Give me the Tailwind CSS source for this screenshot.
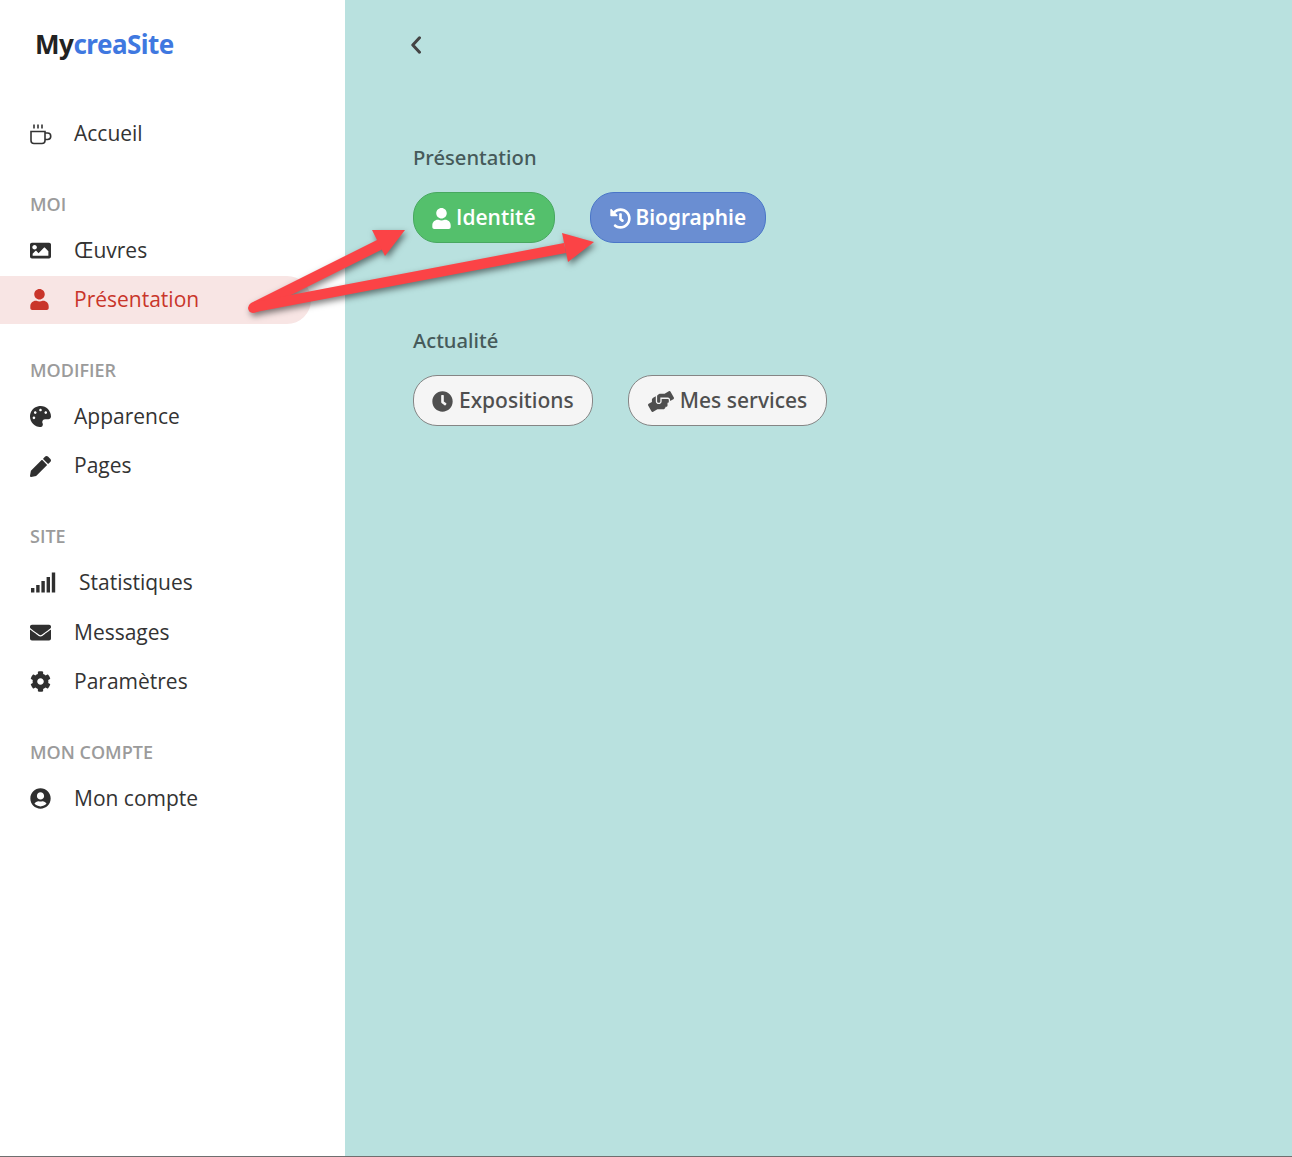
<!DOCTYPE html>
<html lang="fr">
<head>
  <meta charset="UTF-8">
  <title>MycreaSite</title>
  <script src="https://cdn.jsdelivr.net/npm/@tailwindcss/browser@4"></script>
</head>
<body class="bg-white">
<div class="relative flex h-[1157px] w-full overflow-hidden border-b border-[#6f6f6f] font-['Open_Sans',sans-serif]">

  <!-- Sidebar -->
  <aside class="w-[345px] shrink-0 bg-white">
    <div class="flex h-[109px] items-start pl-[35px] pt-[25px] font-['Noto_Sans',sans-serif] text-[26px] leading-[38px] font-bold tracking-[-0.5px]">
      <span class="text-[#222]">My</span><span class="text-[#3f78e0]">creaSite</span>
    </div>

    <nav class="flex flex-col gap-[25px] text-[21px] text-[#333]">
      <div>
        <a class="flex h-[49.6px] w-[311px] items-center pl-[30px]">
          <svg class="w-[22px] h-[22px] shrink-0" viewBox="0 0 22 22" fill="none" stroke="#333" stroke-width="1.6"><path d="M1 8.5h14v9a3 3 0 0 1-3 3H4a3 3 0 0 1-3-3z"/><path d="M15 10h2.5a3.2 3.2 0 0 1 0 6.5H15"/><path d="M4 1.5v4M8 1.5v4M12 1.5v4"/></svg>
          <span class="ml-[22px]">Accueil</span>
        </a>
      </div>

      <div>
        <div class="flex h-[42px] items-center pl-[30px] text-[18px] font-semibold text-[#9b9b9b]">MOI</div>
        <a class="flex h-[49.6px] w-[311px] items-center pl-[30px]">
          <svg class="w-[21px] h-[21px] shrink-0" viewBox="0 0 512 512" fill="#2f2f2f"><path d="M464 448H48c-26.51 0-48-21.49-48-48V112c0-26.51 21.49-48 48-48h416c26.51 0 48 21.49 48 48v288c0 26.51-21.49 48-48 48zM112 120c-30.928 0-56 25.072-56 56s25.072 56 56 56 56-25.072 56-56-25.072-56-56-56zM64 384h384V272l-87.515-87.515c-4.686-4.686-12.284-4.686-16.971 0L208 320l-55.515-55.515c-4.686-4.686-12.284-4.686-16.971 0L64 336v48z"/></svg>
          <span class="ml-[23px]">Œuvres</span>
        </a>
        <a class="my-[0.8px] flex h-[48px] w-[311px] items-center rounded-r-[24px] bg-[#f8e5e4] pl-[30px] text-[#c9352a]">
          <svg class="w-[19px] h-[21px] shrink-0" viewBox="0 0 448 512" fill="#c9352a"><path d="M224 256c70.7 0 128-57.3 128-128S294.7 0 224 0 96 57.3 96 128s57.3 128 128 128zm89.6 32h-16.7c-22.2 10.2-46.9 16-72.9 16s-50.6-5.8-72.9-16h-16.7C60.2 288 0 348.2 0 422.4V464c0 26.5 21.5 48 48 48h352c26.5 0 48-21.5 48-48v-41.6c0-74.2-60.2-134.4-134.4-134.4z"/></svg>
          <span class="ml-[25px]">Présentation</span>
        </a>
      </div>

      <div>
        <div class="flex h-[42px] items-center pl-[30px] text-[18px] font-semibold text-[#9b9b9b]">MODIFIER</div>
        <a class="flex h-[49.6px] w-[311px] items-center pl-[30px]">
          <svg class="w-[21px] h-[21px] shrink-0" viewBox="0 0 512 512" fill="#2f2f2f"><path d="M204.3 5C104.9 24.4 24.8 104.3 5.2 203.4c-37 187 131.7 326.4 258.8 306.7 41.2-6.4 61.4-54.6 42.5-91.7-23.1-45.4 9.9-98.4 60.9-98.4h79.7c35.8 0 64.8-29.6 64.9-65.3C511.5 97.1 368.1-26.9 204.3 5zM96 320c-17.7 0-32-14.3-32-32s14.3-32 32-32 32 14.3 32 32-14.3 32-32 32zm32-128c-17.7 0-32-14.3-32-32s14.3-32 32-32 32 14.3 32 32-14.3 32-32 32zm128-64c-17.7 0-32-14.3-32-32s14.3-32 32-32 32 14.3 32 32-14.3 32-32 32zm128 64c-17.7 0-32-14.3-32-32s14.3-32 32-32 32 14.3 32 32-14.3 32-32 32z"/></svg>
          <span class="ml-[23px]">Apparence</span>
        </a>
        <a class="flex h-[49.6px] w-[311px] items-center pl-[30px]">
          <svg class="w-[21px] h-[21px] shrink-0" viewBox="0 0 512 512" fill="#2f2f2f"><path d="M497.9 142.1l-46.1 46.1c-4.7 4.7-12.3 4.7-17 0l-111-111c-4.7-4.7-4.7-12.3 0-17l46.1-46.1c18.7-18.7 49.1-18.7 67.9 0l60.1 60.1c18.8 18.7 18.8 49.1 0 67.9zM284.2 99.8L21.6 362.4.4 483.9c-2.9 16.4 11.4 30.6 27.8 27.8l121.5-21.3 262.6-262.6c4.7-4.7 4.7-12.3 0-17l-111-111c-4.8-4.7-12.4-4.7-17.1 0z"/></svg>
          <span class="ml-[23px]">Pages</span>
        </a>
      </div>

      <div>
        <div class="flex h-[42px] items-center pl-[30px] text-[18px] font-semibold text-[#9b9b9b]">SITE</div>
        <a class="flex h-[49.6px] w-[311px] items-center pl-[30px]">
          <svg class="w-[26px] h-[21px] shrink-0" viewBox="0 0 26 21" fill="#2f2f2f"><rect x="1" y="16" width="3.4" height="4.5"/><rect x="6.2" y="13" width="3.4" height="7.5"/><rect x="11.4" y="9" width="3.4" height="11.5"/><rect x="16.6" y="5" width="3.4" height="15.5"/><rect x="21.8" y="0.5" width="3.4" height="20"/></svg>
          <span class="ml-[23px]">Statistiques</span>
        </a>
        <a class="flex h-[49.6px] w-[311px] items-center pl-[30px]">
          <svg class="w-[21px] h-[21px] shrink-0" viewBox="0 0 512 512" fill="#2f2f2f"><path d="M502.3 190.8c3.9-3.1 9.7-.2 9.7 4.7V400c0 26.5-21.5 48-48 48H48c-26.5 0-48-21.5-48-48V195.6c0-5 5.7-7.8 9.7-4.7 22.4 17.4 52.1 39.5 154.1 113.6 21.1 15.4 56.7 47.8 92.2 47.6 35.7.3 72-32.8 92.3-47.6 102-74.1 131.6-96.3 154-113.7zM256 320c23.2.4 56.6-29.2 73.4-41.4 132.7-96.3 142.8-104.7 173.4-128.7 5.8-4.5 9.2-11.5 9.2-18.9v-19c0-26.5-21.5-48-48-48H48C21.5 64 0 85.5 0 112v19c0 7.4 3.4 14.3 9.2 18.9 30.6 23.9 40.7 32.4 173.4 128.7 16.8 12.2 50.2 41.8 73.4 41.4z"/></svg>
          <span class="ml-[23px]">Messages</span>
        </a>
        <a class="flex h-[49.6px] w-[311px] items-center pl-[30px]">
          <svg class="w-[21px] h-[21px] shrink-0" viewBox="0 0 512 512" fill="#2f2f2f"><path d="M487.4 315.7l-42.6-24.6c4.3-23.2 4.3-47 0-70.2l42.6-24.6c4.9-2.8 7.1-8.6 5.5-14-11.1-35.6-30-67.8-54.7-94.6-3.8-4.1-10-5.1-14.8-2.3L380.8 110c-17.9-15.4-38.5-27.3-60.8-35.1V25.8c0-5.6-3.9-10.5-9.4-11.7-36.7-8.2-74.3-7.8-109.2 0-5.5 1.2-9.4 6.1-9.4 11.7V75c-22.2 7.9-42.8 19.8-60.8 35.1L88.7 85.5c-4.9-2.8-11-1.9-14.8 2.3-24.7 26.7-43.6 58.9-54.7 94.6-1.7 5.4.6 11.2 5.5 14L67.3 221c-4.3 23.2-4.3 47 0 70.2l-42.6 24.6c-4.9 2.8-7.1 8.6-5.5 14 11.1 35.6 30 67.8 54.7 94.6 3.8 4.1 10 5.1 14.8 2.3l42.6-24.6c17.9 15.4 38.5 27.3 60.8 35.1v49.2c0 5.6 3.9 10.5 9.4 11.7 36.7 8.2 74.3 7.8 109.2 0 5.5-1.2 9.4-6.1 9.4-11.7v-49.2c22.2-7.9 42.8-19.8 60.8-35.1l42.6 24.6c4.9 2.8 11 1.9 14.8-2.3 24.7-26.7 43.6-58.9 54.7-94.6 1.5-5.5-.7-11.3-5.6-14.1zM256 336c-44.1 0-80-35.9-80-80s35.9-80 80-80 80 35.9 80 80-35.9 80-80 80z"/></svg>
          <span class="ml-[23px]">Paramètres</span>
        </a>
      </div>

      <div>
        <div class="flex h-[42px] items-center pl-[30px] text-[18px] font-semibold text-[#9b9b9b]">MON COMPTE</div>
        <a class="flex h-[49.6px] w-[311px] items-center pl-[30px]">
          <svg class="w-[21px] h-[21px] shrink-0" viewBox="0 0 496 512" fill="#2f2f2f"><path d="M248 8C111 8 0 119 0 256s111 248 248 248 248-111 248-248S385 8 248 8zm0 96c48.6 0 88 39.4 88 88s-39.4 88-88 88-88-39.4-88-88 39.4-88 88-88zm0 344c-58.7 0-111.3-26.6-146.5-68.2 18.8-35.4 55.6-59.8 98.5-59.8 2.4 0 4.8.4 7.1 1.1 13 4.2 26.6 6.9 40.9 6.9 14.3 0 28-2.7 40.9-6.9 2.3-.7 4.7-1.1 7.1-1.1 42.9 0 79.7 24.4 98.5 59.8C359.3 421.4 306.7 448 248 448z"/></svg>
          <span class="ml-[23px]">Mon compte</span>
        </a>
      </div>
    </nav>
  </aside>

  <!-- Contenu -->
  <main class="flex-1 bg-[#b9e1df] pl-[68px] font-['Noto_Sans',sans-serif]">
    <div class="flex h-[138px] items-start pt-[36px]">
      <svg class="w-[10px] h-[18px] ml-[-2px]" viewBox="0 0 10 18" fill="none" stroke="#444" stroke-width="3" stroke-linecap="round" stroke-linejoin="round"><path d="M8.5 1.8 1.8 9l6.7 7.2"/></svg>
    </div>

    <h2 class="h-[36px] pt-[1px] text-[20.2px] leading-[36px] font-medium text-[#465a5a]">Présentation</h2>
    <div class="mt-[18px] flex gap-[35px]">
      <a class="flex h-[51px] items-center rounded-[24px] border border-[#48a860] bg-[#54c06c] px-[18px] pt-[1px] font-['Open_Sans',sans-serif] text-[21px] font-semibold text-white">
        <svg class="w-[19px] h-[21px] mr-[5px]" viewBox="0 0 448 512" fill="#fff"><path d="M224 256c70.7 0 128-57.3 128-128S294.7 0 224 0 96 57.3 96 128s57.3 128 128 128zm89.6 32h-16.7c-22.2 10.2-46.9 16-72.9 16s-50.6-5.8-72.9-16h-16.7C60.2 288 0 348.2 0 422.4V464c0 26.5 21.5 48 48 48h352c26.5 0 48-21.5 48-48v-41.6c0-74.2-60.2-134.4-134.4-134.4z"/></svg>
        Identité
      </a>
      <a class="flex h-[51px] items-center rounded-[24px] border border-[#4a76c8] bg-[#6a8ed2] px-[19px] pt-[1px] text-[20.8px] font-semibold text-white">
        <svg class="w-[21px] h-[21px] mr-[5px]" viewBox="0 0 512 512" fill="#fff"><path d="M504 255.531c.253 136.64-111.18 248.372-247.82 248.468-59.015.042-113.223-20.53-155.822-54.911-11.077-8.94-11.905-25.541-1.839-35.607l11.267-11.267c8.609-8.609 22.353-9.551 31.891-1.984C173.062 425.135 212.781 440 256 440c101.705 0 184-82.311 184-184 0-101.705-82.311-184-184-184-48.814 0-93.149 18.969-126.068 49.932l50.754 50.754c10.08 10.08 2.941 27.314-11.313 27.314H24c-8.837 0-16-7.163-16-16V38.627c0-14.254 17.234-21.393 27.314-11.314l49.372 49.372C129.209 34.136 189.552 8 256 8c136.81 0 247.747 110.78 248 247.531zm-180.912 78.784l9.823-12.63c8.138-10.463 6.253-25.542-4.21-33.679L288 256.349V152c0-13.255-10.745-24-24-24h-16c-13.255 0-24 10.745-24 24v135.651l65.409 50.874c10.463 8.137 25.541 6.253 33.679-4.21z"/></svg>
        Biographie
      </a>
    </div>

    <h2 class="mt-[78px] h-[36px] pt-[1px] text-[20.2px] leading-[36px] font-medium text-[#465a5a]">Actualité</h2>
    <div class="mt-[18px] flex gap-[35px]">
      <a class="flex h-[51px] items-center rounded-[24px] border border-[#858585] bg-[#f5f5f5] px-[18px] pt-[1px] text-[21px] font-medium text-[#4f4f4f]">
        <svg class="w-[21px] h-[21px] mr-[6px]" viewBox="0 0 512 512" fill="#4f4f4f"><path d="M256,8C119,8,8,119,8,256S119,504,256,504,504,393,504,256,393,8,256,8Zm92.49,313h0l-20,25a16,16,0,0,1-22.49,2.5h0l-67-49.72a40,40,0,0,1-15-31.23V112a16,16,0,0,1,16-16h32a16,16,0,0,1,16,16V256l58,42.5A16,16,0,0,1,348.49,321Z"/></svg>
        Expositions
      </a>
      <a class="flex h-[51px] items-center rounded-[24px] border border-[#858585] bg-[#f5f5f5] px-[19px] pt-[1px] text-[21px] font-medium text-[#4f4f4f]">
        <svg class="w-[26px] h-[21px] mr-[6px]" viewBox="0 0 640 512" fill="#4f4f4f"><path d="M488 192H336v56c0 39.7-32.3 72-72 72s-72-32.3-72-72V126.4l-64.9 39C107.8 176.9 96 197.8 96 220.2v47.3l-80 46.2C.7 322.5-4.6 342.1 4.3 357.4l80 138.6c8.8 15.3 28.4 20.5 43.7 11.7L231.4 448H368c35.3 0 64-28.7 64-64h16c17.7 0 32-14.3 32-32v-64h8c13.3 0 24-10.7 24-24v-48c0-13.3-10.7-24-24-24zm147.7-37.4L555.7 16C546.9.7 527.3-4.5 512 4.3L408.6 64H306.4c-12 0-23.7 3.4-33.9 9.7L239 94.6c-9.4 5.8-15 16.1-15 27.1V248c0 22.1 17.9 40 40 40s40-17.9 40-40v-88h184c30.9 0 56 25.1 56 56v28.5l80-46.2c15.3-8.9 20.5-28.4 11.7-43.7z"/></svg>
        Mes services
      </a>
    </div>
  </main>

  <!-- Fleches annotees par dessus la page -->
  <svg class="pointer-events-none absolute left-0 top-0 h-[1157px] w-[1292px] drop-shadow-[2px_3px_3px_rgba(0,0,0,0.5)]" viewBox="0 0 1292 1157" fill="#fb4346" stroke="none">
    <path d="M251 303 381 238 387 247 257 312 Q249 315 248 308 Q248 305 251 303Z"/>
    <polygon points="372,230 405,230 385,256"/>
    <path d="M254 302 564 243 566 253 256 312Z"/>
    <polygon points="562,233 594,242 568,262"/>
  </svg>
</div>
</body>
</html>
